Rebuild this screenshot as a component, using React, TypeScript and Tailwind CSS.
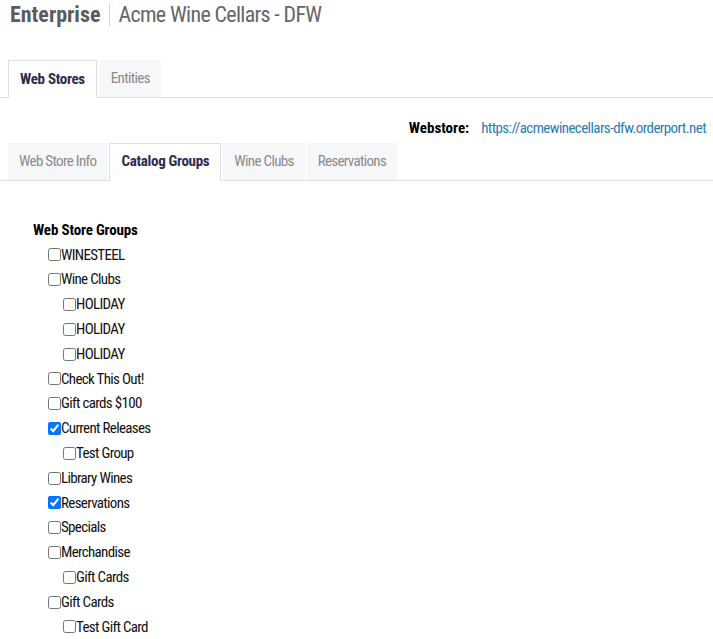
import React from 'react';

const font = { fontFamily: '"Roboto Condensed", Roboto, "Liberation Sans", sans-serif' };

type Group = { name: string; checked?: boolean; level: number };

const groups: Group[] = [
  { name: 'WINESTEEL', level: 1 },
  { name: 'Wine Clubs', level: 1 },
  { name: 'HOLIDAY', level: 2 },
  { name: 'HOLIDAY', level: 2 },
  { name: 'HOLIDAY', level: 2 },
  { name: 'Check This Out!', level: 1 },
  { name: 'Gift cards $100', level: 1 },
  { name: 'Current Releases', level: 1, checked: true },
  { name: 'Test Group', level: 2 },
  { name: 'Library Wines', level: 1 },
  { name: 'Reservations', level: 1, checked: true },
  { name: 'Specials', level: 1 },
  { name: 'Merchandise', level: 1 },
  { name: 'Gift Cards', level: 2 },
  { name: 'Gift Cards', level: 1 },
  { name: 'Test Gift Card', level: 2 },
];

const Tab: React.FC<{ label: string; active?: boolean }> = ({ label, active }) => (
  <div
    className={
      active
        ? 'h-[38px] flex items-center px-[11px] bg-white border border-[#dcdfe4] border-b-white -mb-px font-bold tracking-[-0.02em] text-[#2e2c4f] text-[15px]'
        : 'h-[37px] flex items-center px-[11px] bg-[#f6f7f9] text-[#8a8a8a] text-[15px] tracking-[-0.045em]'
    }
  >
    {label}
  </div>
);

export default function App() {
  return (
    <div className="w-[713px] h-[639px] bg-white overflow-hidden" style={font}>
      <div className="flex items-center h-[27px] pl-[10px] pt-[1px]">
        <span className="text-[22px] font-bold text-[#5b5b5b]">Enterprise</span>
        <span className="w-px h-[23px] bg-[#d8d8d8] ml-[9px] mr-[8px]"></span>
        <span className="text-[22px] text-[#666] tracking-[-0.03em]">Acme Wine Cellars - DFW</span>
      </div>

      <div className="mt-[33px] flex gap-[3px] pl-[8px] border-b border-[#dcdfe4]">
        <Tab label="Web Stores" active />
        <Tab label="Entities" />
      </div>

      <div className="flex justify-end items-center gap-[12px] pr-[7px] mt-[19px] text-[15px]">
        <span className="font-bold text-black">Webstore:</span>
        <span className="text-[#2b7bb3] tracking-[-0.04em]">https://acmewinecellars-dfw.orderport.net</span>
      </div>

      <div className="mt-[3px] flex gap-[2px] pl-[8px] border-b border-[#dcdfe4]">
        <Tab label="Web Store Info" />
        <Tab label="Catalog Groups" active />
        <Tab label="Wine Clubs" />
        <Tab label="Reservations" />
      </div>

      <div className="pl-[33px] pt-[38px]">
        <div className="font-bold text-[15px] text-black h-[24px] flex items-center tracking-[-0.01em]">Web Store Groups</div>
        {groups.map((g, i) => (
          <label
            key={i}
            className={`flex items-center h-[24.8px] text-[15px] text-[#111] tracking-[-0.045em] ${g.level === 2 ? 'pl-[30px]' : 'pl-[15px]'}`}
          >
            <input type="checkbox" defaultChecked={g.checked} className="m-0 w-[13px] h-[13px]" />
            <span>{g.name}</span>
          </label>
        ))}
      </div>
    </div>
  );
}
